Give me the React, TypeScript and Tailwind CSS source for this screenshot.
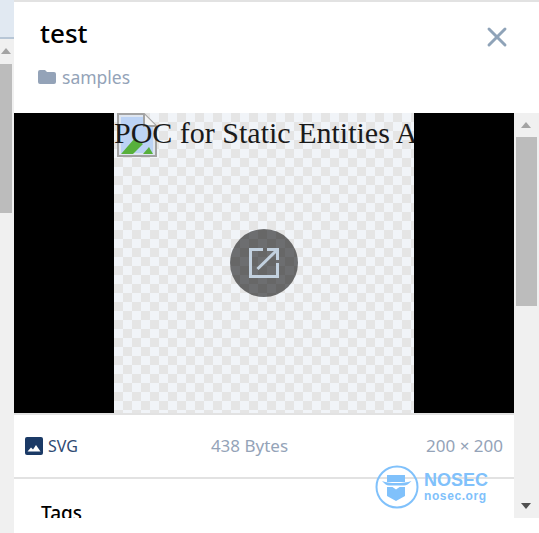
import React from 'react';
import { X } from 'lucide-react';

function BrokenImage() {
  return (
    <svg viewBox="0 0 40 44" className="absolute left-[3px] top-0 h-[44px] w-[40px]">
      <path d="M1 1h26l12 12v30H1z" fill="#dfe6f0" stroke="#a3a3a3" strokeWidth="2" />
      <path d="M4 4h22v10h10v26H4z" fill="#bcd3f5" />
      <path d="M4 41l14-16 8 6-10 10z" fill="#57b03c" />
      <path d="M26 41l6-7 4 7z" fill="#57b03c" />
      <path d="M27 1v12h12" fill="#f4f4f4" stroke="#a3a3a3" strokeWidth="2" />
    </svg>
  );
}

function OpenInNew() {
  return (
    <svg viewBox="0 0 30 30" className="h-[30px] w-[30px]" fill="none" stroke="currentColor" strokeWidth="3">
      <path d="M14 1.500H1.500v27h27V15" />
      <path d="M8.500 21L27.500 2.500" />
      <path d="M18 1.500h10.500V12" />
    </svg>
  );
}

function Watermark() {
  return (
    <div className="absolute left-[375px] top-[465px] flex items-center gap-[5px] text-[#80c1fb]">
      <svg viewBox="0 0 44 44" className="h-[44px] w-[44px]">
        <circle cx="22" cy="22" r="20.500" fill="none" stroke="currentColor" strokeWidth="2" />
        <path d="M12 10h18v7H12z" fill="currentColor" />
        <path d="M7 16c4 1.500 8 2 14.500 2s10.500-.5 15-2c-3 3-5 4.500-7.500 4.500H14c-2.500 0-4-1.500-7-4.500z" fill="currentColor" />
        <path d="M12 22h5.500l3.500 2.500 3.500-2.500H30v9l-9 5-9-5z" fill="currentColor" />
      </svg>
      <div className="flex flex-col gap-[1px] font-['Liberation_Sans',sans-serif]">
        <span className="text-[18px] font-bold leading-[18px]">NOSEC</span>
        <span className="text-[12px] font-bold leading-[13px] tracking-[0.6px]">nosec.org</span>
      </div>
    </div>
  );
}

export default function App() {
  return (
    <div className="relative flex h-[533px] w-[539px] overflow-hidden bg-white font-['Noto_Sans',sans-serif]">
      {/* page scrollbar behind the dialog */}
      <div className="flex w-[14px] shrink-0 flex-col bg-[#f0f0f0]">
        <div className="h-[37px] bg-[#e1e9f2]"></div>
        <div className="h-[2px] bg-[#b7c6d6]"></div>
        <div className="ml-[1px] mt-[9px] h-0 w-0 border-x-[5px] border-b-[6px] border-x-transparent border-b-[#a3a3a3]"></div>
        <div className="mt-[10px] h-[149px] w-[12px] bg-[#bcbcbc]"></div>
      </div>

      <div className="flex w-[525px] flex-col border-t-2 border-[#e2e2e2]">
        <div className="relative h-[111px] shrink-0 pl-[26px]">
          <h1 className="pt-[14px] text-[26px] font-medium leading-[34px] text-black">test</h1>
          <div className="-ml-[2px] mt-[15px] flex items-center gap-[6px] text-[#94a3b8]">
            <svg viewBox="0 0 18 14" className="h-[14px] w-[18px]" fill="currentColor">
              <path d="M2 0h5l2 2h7a2 2 0 0 1 2 2v8a2 2 0 0 1-2 2H2a2 2 0 0 1-2-2V2a2 2 0 0 1 2-2z" />
            </svg>
            <span className="text-[17.500px] leading-[24px]">samples</span>
          </div>
          <button className="absolute right-[26px] top-[19px] text-[#8fa3b8]">
            <X size={32} strokeWidth={2.2} />
          </button>
        </div>

        <div className="flex h-[405px] shrink-0">
          <div className="h-full w-[500px] overflow-hidden">
            <div className="flex h-[300px] justify-center bg-black">
              <div className="relative h-[300px] w-[300px] overflow-hidden bg-[repeating-conic-gradient(#e5e5e5_0_25%,#f1f4f8_0_50%)] bg-[length:18px_18px]">
                <BrokenImage />
                <span className="relative block whitespace-nowrap font-['Liberation_Serif',serif] text-[30px] leading-[40px] text-[#1a1a1a]">
                  POC for Static Entities A
                </span>
                <div className="absolute left-[116px] top-[116px] flex h-[68px] w-[68px] items-center justify-center rounded-full bg-black/55 text-[#c3d1df]">
                  <OpenInNew />
                </div>
              </div>
            </div>

            <div className="flex h-[66px] items-center justify-between border-y-2 border-[#e2e2e2] px-[11px]">
              <div className="flex items-center gap-[5px] text-[16px] text-[#2f4a72]">
                <svg viewBox="0 0 18 18" className="h-[18px] w-[18px]">
                  <rect width="18" height="18" rx="2" fill="#1b3a66" />
                  <path d="M2.500 14.500l3.500-4 2 2 3-4.500 4.500 6.500z" fill="#fff" />
                </svg>
                <span>SVG</span>
              </div>
              <span className="-ml-[5px] text-[17px] text-[#94a3b8]">438 Bytes</span>
              <span className="text-[17px] text-[#94a3b8]">200 × 200</span>
            </div>

            <h2 className="pl-[27px] pt-[20px] text-[19px] font-medium leading-[28px] text-black">Tags</h2>
          </div>

          {/* modal scrollbar */}
          <div className="flex w-[25px] shrink-0 flex-col bg-[#f0f0f0]">
            <div className="ml-[7px] mt-[9px] h-0 w-0 border-x-[5px] border-b-[6px] border-x-transparent border-b-[#a3a3a3]"></div>
            <div className="ml-[2px] mt-[9px] h-[169px] w-[21px] bg-[#bcbcbc]"></div>
            <div className="ml-[7px] mt-[197px] h-0 w-0 border-x-[5px] border-t-[6px] border-x-transparent border-t-[#505050]"></div>
          </div>
        </div>
      </div>

      <Watermark />
    </div>
  );
}
